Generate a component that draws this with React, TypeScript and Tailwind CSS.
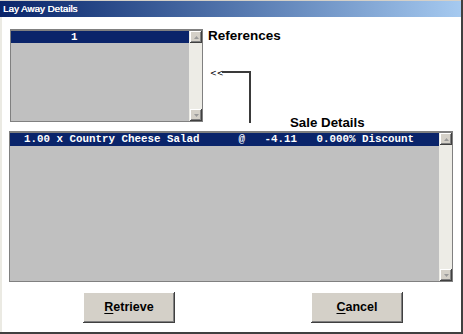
import React from 'react'

const ScrollBtn = ({ down }: { down?: boolean }) => (
    <div className="w-[12px] h-[12px] bg-[#d4d0c8] flex items-center justify-center shadow-[inset_-1px_-1px_0_#404040,inset_1px_1px_0_#ffffff,inset_-2px_-2px_0_#808080]">
        {down ? (
            <svg width="5" height="3" viewBox="0 0 5 3"><path d="M0 0 L5 0 L2.5 3 Z" fill="#9a9a9a" /></svg>
        ) : (
            <svg width="5" height="3" viewBox="0 0 5 3"><path d="M2.5 0 L5 3 L0 3 Z" fill="#9a9a9a" /></svg>
        )}
    </div>
)

const ScrollBar = () => (
    <div className="w-[13px] pl-[1px] flex flex-col justify-between bg-[#edece6]">
        <ScrollBtn />
        <ScrollBtn down />
    </div>
)

const DlgButton = ({ label }: { label: string }) => (
    <button className="w-[92px] h-[31px] bg-[#d4d0c8] font-['Liberation_Sans',Arial,sans-serif] font-bold text-[12.5px] text-black shadow-[inset_-1px_-1px_0_#404040,inset_1px_1px_0_#ffffff,inset_-2px_-2px_0_#808080]">
        <span className="underline underline-offset-2">{label[0]}</span>{label.slice(1)}
    </button>
)

export default function App() {
    return (
        <div className="w-[463px] h-[334px] flex flex-col bg-white border-r-2 border-b-2 border-[#404040] overflow-hidden">
            <div className="h-[17px] border-t border-[#d4d0c8] bg-gradient-to-r from-[#0a246a] to-[#a6caf0] pl-[3px] flex items-center">
                <span className="text-white text-[9.8px] leading-none font-['Liberation_Sans',Arial,sans-serif] [text-shadow:0.3px_0_0_#ffffff]">Lay Away Details</span>
            </div>
            <div className="flex-1 flex flex-col border-l-2 border-[#ebeae3] pl-[8px] font-['Liberation_Sans',Arial,sans-serif]">
                <div className="flex mt-[12px] h-[102px]">
                    <div className="w-[193px] h-[93px] flex border border-t-2 border-[#808080]">
                        <div className="flex-1 bg-[#c0c0c0]">
                            <div className="h-[12px] bg-[#0a246a] text-white font-['Liberation_Mono',monospace] font-bold text-[10.83px] leading-[12px] pl-[60px] whitespace-pre">1</div>
                        </div>
                        <ScrollBar />
                    </div>
                    <div className="ml-[5px] flex-1 flex flex-col">
                        <div className="-mt-[1px] font-bold text-[13.5px] leading-[15px] text-black">References</div>
                        <div className="flex flex-1">
                            <div className="flex items-start pt-[28px]">
                                <span className="w-[14px] pl-[2px] -mt-[2px] text-[8px] leading-[10px] text-black font-['DejaVu_Sans',sans-serif]">&lt;&lt;</span>
                                <div className="w-[29px] h-[52px] border-t-2 border-r-2 border-[#3a3a3a]"></div>
                            </div>
                            <div className="self-end ml-[39px] mb-[1px] font-bold text-[13.3px] leading-[15px] text-black">Sale Details</div>
                        </div>
                    </div>
                </div>
                <div className="-ml-[1px] w-[444px] h-[151px] flex border border-t-2 border-[#808080]">
                    <div className="flex-1 bg-[#c0c0c0]">
                        <div className="h-[13px] bg-[#0a246a] text-white font-['Liberation_Mono',monospace] font-bold text-[10.83px] leading-[13px] pl-[14px] whitespace-pre">1.00 x Country Cheese Salad      @   -4.11   0.000% Discount</div>
                    </div>
                    <ScrollBar />
                </div>
                <div className="flex mt-[10px] pl-[73px] gap-[136px]">
                    <DlgButton label="Retrieve" />
                    <DlgButton label="Cancel" />
                </div>
            </div>
        </div>
    )
}
